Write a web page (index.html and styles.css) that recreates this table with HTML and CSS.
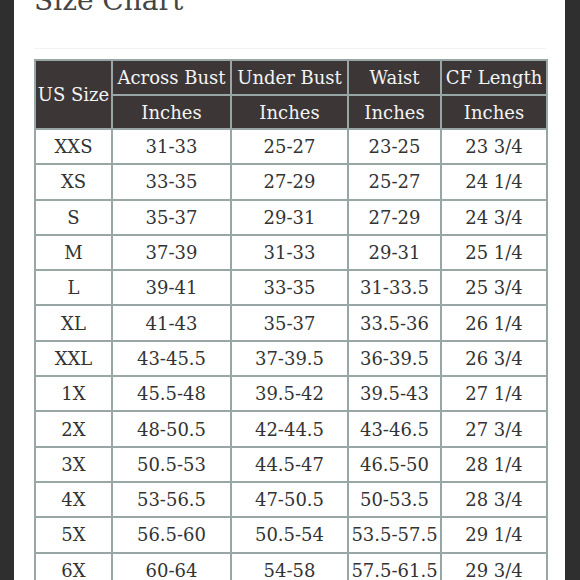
FILE: index.html
```html
<!DOCTYPE html>
<html>
<head>
<meta charset="utf-8">
<link rel="stylesheet" href="styles.css">
</head>
<body>
<div class="page">
  <h1 class="title">Size Chart</h1>
  <div class="rule"></div>
  <table class="chart">
    <colgroup>
      <col class="c1"><col class="c2"><col class="c3"><col class="c4"><col class="c5">
    </colgroup>
    <thead>
      <tr class="h1row">
        <th rowspan="2">US Size</th>
        <th>Across Bust</th>
        <th>Under Bust</th>
        <th>Waist</th>
        <th>CF Length</th>
      </tr>
      <tr class="h2row">
        <th>Inches</th><th>Inches</th><th>Inches</th><th>Inches</th>
      </tr>
    </thead>
    <tbody>
      <tr><td>XXS</td><td>31-33</td><td>25-27</td><td>23-25</td><td>23 3/4</td></tr>
      <tr><td>XS</td><td>33-35</td><td>27-29</td><td>25-27</td><td>24 1/4</td></tr>
      <tr><td>S</td><td>35-37</td><td>29-31</td><td>27-29</td><td>24 3/4</td></tr>
      <tr><td>M</td><td>37-39</td><td>31-33</td><td>29-31</td><td>25 1/4</td></tr>
      <tr><td>L</td><td>39-41</td><td>33-35</td><td>31-33.5</td><td>25 3/4</td></tr>
      <tr><td>XL</td><td>41-43</td><td>35-37</td><td>33.5-36</td><td>26 1/4</td></tr>
      <tr><td>XXL</td><td>43-45.5</td><td>37-39.5</td><td>36-39.5</td><td>26 3/4</td></tr>
      <tr><td>1X</td><td>45.5-48</td><td>39.5-42</td><td>39.5-43</td><td>27 1/4</td></tr>
      <tr><td>2X</td><td>48-50.5</td><td>42-44.5</td><td>43-46.5</td><td>27 3/4</td></tr>
      <tr><td>3X</td><td>50.5-53</td><td>44.5-47</td><td>46.5-50</td><td>28 1/4</td></tr>
      <tr><td>4X</td><td>53-56.5</td><td>47-50.5</td><td>50-53.5</td><td>28 3/4</td></tr>
      <tr><td>5X</td><td>56.5-60</td><td>50.5-54</td><td>53.5-57.5</td><td>29 1/4</td></tr>
      <tr><td>6X</td><td>60-64</td><td>54-58</td><td>57.5-61.5</td><td>29 3/4</td></tr>
    </tbody>
  </table>
</div>
</body>
</html>
```
FILE: styles.css
```css
html, body {
  margin: 0;
  padding: 0;
  background: #2f2f2f;
  height: 580px;
  overflow: hidden;
}
.page {
  margin: 0 15px 0 14px;
  height: 580px;
  background: #ffffff;
  padding: 0 0 0 20px;
  overflow: hidden;
  font-family: "DejaVu Serif", "Liberation Serif", serif;
}
.title {
  margin: -19px 0 0 0;
  font-size: 28px;
  line-height: 40px;
  font-weight: normal;
  color: #444;
  height: 40px;
}
.rule {
  height: 1px;
  width: 512px;
  margin-top: 27px;
  background: #f3f3f3;
}
.chart {
  margin-top: 10px;
  border-collapse: collapse;
  table-layout: fixed;
  width: 514px;
  font-size: 18px;
}
.c1 { width: 77px; }
.c2 { width: 119px; }
.c3 { width: 117px; }
.c4 { width: 93px; }
.c5 { width: 106px; }
.chart th, .chart td {
  border: 2px solid #98a6a6;
  text-align: center;
  padding: 0;
  white-space: nowrap;
  overflow: hidden;
}
.chart th {
  background: #3c3736;
  color: #f4f4f4;
  font-weight: normal;
}
.h1row th { height: 33px; }
.h2row th { height: 32px; }
.chart td {
  height: 33.3px;
  color: #333;
}
```
